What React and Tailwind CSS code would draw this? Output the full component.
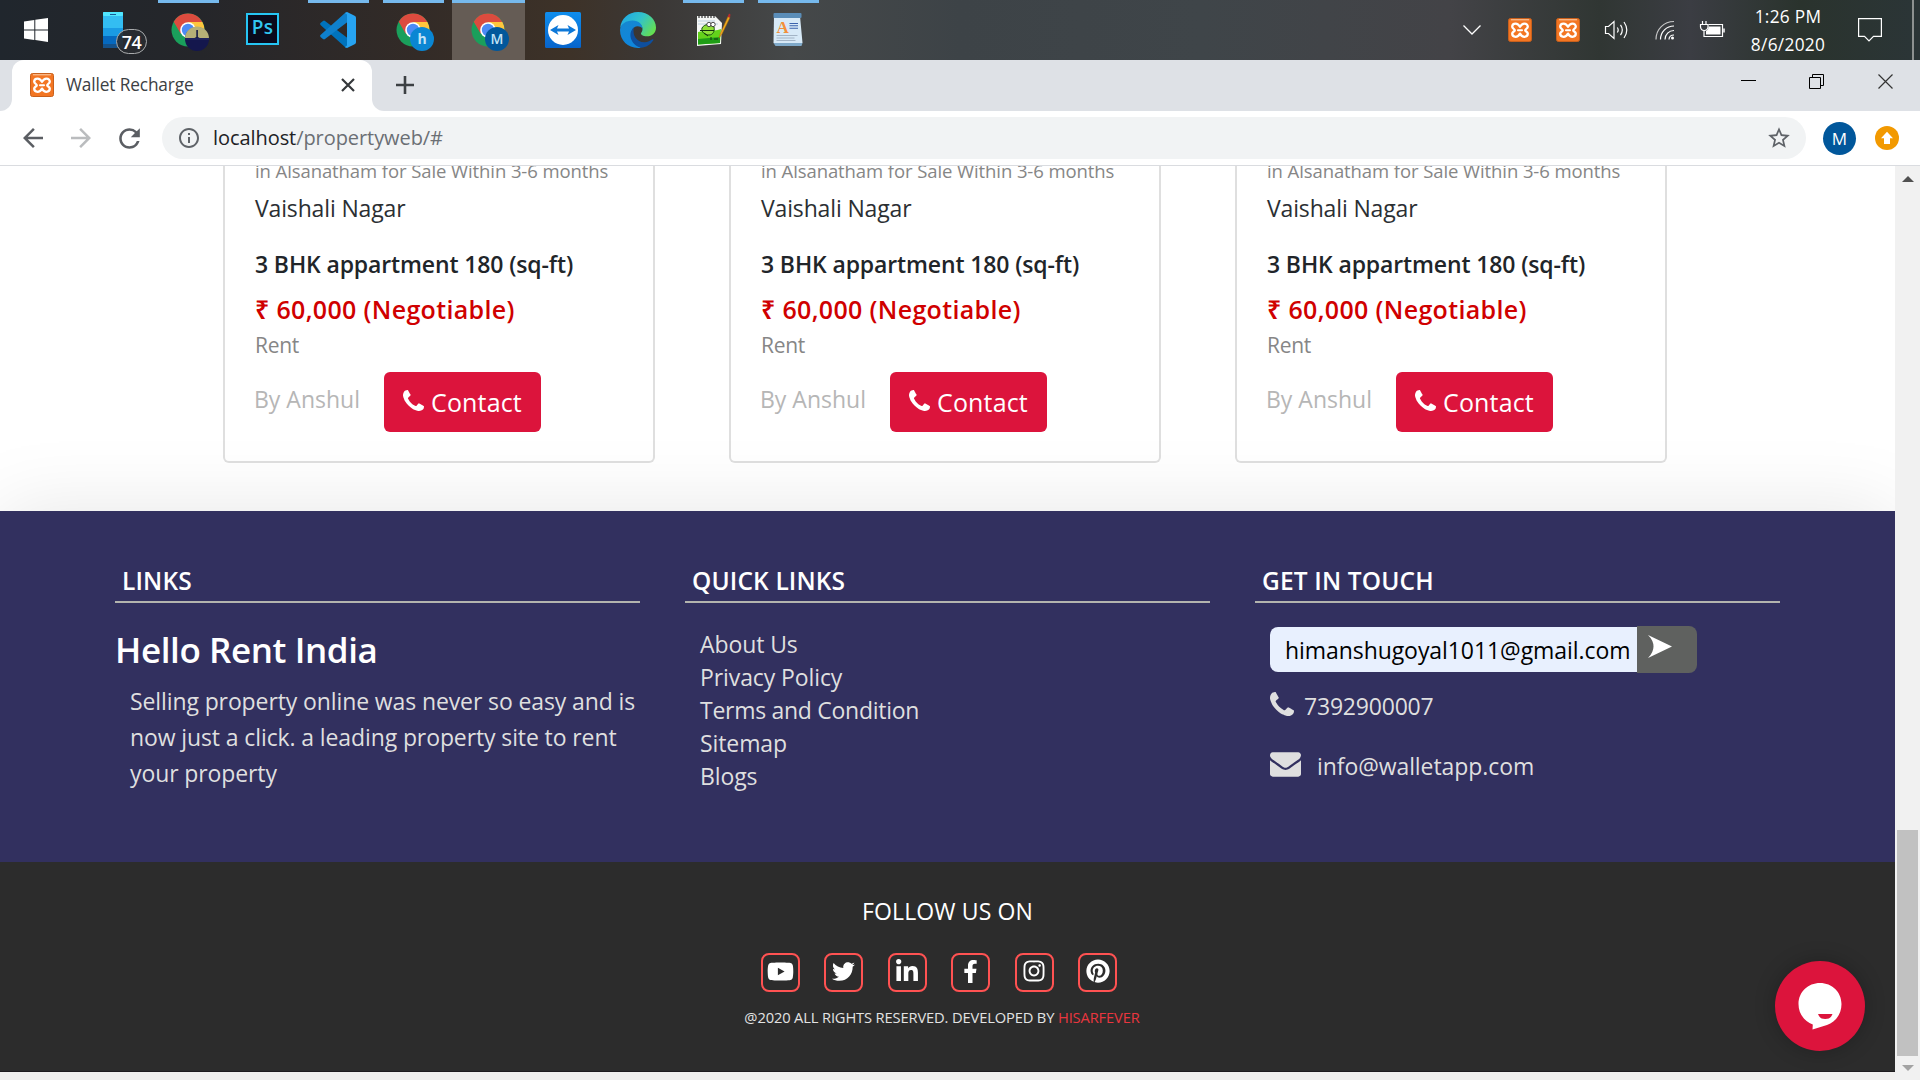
import React from "react";
import { FaYoutube, FaTwitter, FaLinkedinIn, FaFacebookF, FaInstagram, FaPinterest } from "react-icons/fa";
import { MdArrowBack, MdArrowForward, MdRefresh, MdInfoOutline, MdStarBorder } from "react-icons/md";

/* ---------- shared icons ---------- */

function PhoneIcon({ className }) {
  return (
    <svg viewBox="0 -1408 1408 1408" className={className} fill="currentColor">
      <path
        transform="scale(1,-1)"
        d="M1408 296q0 -27 -10 -70.5t-21 -68.5q-21 -50 -122 -106q-94 -51 -186 -51q-27 0 -53 3.5t-57.5 12.5t-47 14.5t-55.5 20.5t-49 18q-98 35 -175 83q-127 79 -264 216t-216 264q-48 77 -83 175q-3 9 -18 49t-20.5 55.5t-14.5 47t-12.5 57.5t-3.5 53q0 92 51 186q56 101 106 122q25 11 68.5 21t70.5 10q14 0 21 -3q18 -6 53 -76q11 -19 30 -54t35 -63.5t31 -53.5q3 -4 17.5 -25t21.5 -35.5t7 -28.5q0 -20 -28.5 -50t-62 -55t-62 -53t-28.5 -46q0 -9 5 -22.5t8.5 -20.5t14 -24t11.5 -19q76 -137 174 -235t235 -174q2 -1 19 -11.5t24 -14t20.5 -8.5t22.5 -5q18 0 46 28.5t53 62t55 62t50 28.5q14 0 28.5 -7t35.5 -21.5t25 -17.5q25 -15 53.5 -31t63.5 -35t54 -30q70 -35 76 -53q3 -7 3 -21z"
      />
    </svg>
  );
}

function EnvelopeIcon({ className }) {
  return (
    <svg viewBox="0 -1280 1792 1408" className={className} fill="currentColor">
      <path
        transform="scale(1,-1)"
        d="M1792 826v-794q0 -66 -47 -113t-113 -47h-1472q-66 0 -113 47t-47 113v794q44 -49 101 -87q362 -246 497 -345q57 -42 92.5 -65.5t94.5 -48t110 -24.5h1h1q51 0 110 24.5t94.5 48t92.5 65.5q170 123 498 345q57 39 100 87zM1792 1120q0 -79 -49 -151t-122 -123q-376 -261 -468 -325q-10 -7 -42.5 -31t-54 -38.5t-52 -32.5t-57.5 -27t-50 -9h-1h-1q-23 0 -50 9t-57.5 27t-52 32.5t-54 38.5t-42.5 31q-91 64 -262 182.5t-205 142.5q-62 42 -117 115.5t-55 136.5q0 78 41.5 130t118.5 52h1472q65 0 112.5 -47t47.5 -113z"
      />
    </svg>
  );
}

function XamppIcon() {
  return (
    <svg viewBox="0 0 24 24" className="h-6 w-6 shrink-0">
      <rect x="0.5" y="0.5" width="23" height="23" rx="2" fill="#f37623" stroke="#c9601c" />
      <rect x="3" y="1" width="18" height="1.4" fill="#f9b684" />
      <path
        d="M12 8.8C11 7 9.8 5.600 7.600 5.600C5.400 5.600 4.200 7 4.200 8.800C4.200 10.600 6.800 11 6.800 12.200C6.800 13.400 4.200 13.800 4.200 15.600C4.200 17.400 5.400 18.800 7.600 18.800C9.800 18.800 11 17.400 12 15.600C13 17.400 14.200 18.800 16.400 18.800C18.600 18.800 19.800 17.400 19.800 15.600C19.800 13.800 17.200 13.400 17.200 12.200C17.200 11 19.800 10.600 19.800 8.800C19.800 7 18.600 5.600 16.400 5.600C14.200 5.600 13 7 12 8.800Z"
        fill="none"
        stroke="#fff"
        strokeWidth="2.3"
        strokeLinejoin="round"
      />
      <path d="M10 12.200h4" stroke="#fff" strokeWidth="2" strokeLinecap="round" />
    </svg>
  );
}

/* ---------- taskbar ---------- */

function WindowsLogo() {
  return (
    <svg viewBox="0 0 24 24" className="h-6 w-6" fill="#fff">
      <path d="M0 3.4L10.3 2v9.4H0zM11.3 1.8L24 0v11.4H11.3zM0 12.4h10.3v9.5L0 20.6zM11.3 12.4H24V24l-12.7-1.9z" />
    </svg>
  );
}

function PhoneApp() {
  return (
    <div className="relative h-9 w-5">
      <svg viewBox="0 0 20 36" className="h-9 w-5">
        <rect width="20" height="36" rx="1" fill="#33bdf2" />
        <rect width="20" height="4" rx="1" fill="#50e6ff" />
        <rect x="7" y="2" width="6" height="1" fill="#185a97" />
        <rect y="16" width="20" height="8" fill="#1a9be4" />
        <rect y="24" width="20" height="8" fill="#0669bf" />
        <rect y="32" width="20" height="4" fill="#15528b" />
      </svg>
      <span className="absolute left-[13px] top-[17px] flex h-[25px] w-[31px] items-center justify-center rounded-full border border-[#a9abad] bg-[#292c31]/90 pl-px text-[18px] font-semibold leading-none tracking-[-0.5px] text-white">
        74
      </span>
    </div>
  );
}

function ChromeApp({ children }) {
  return (
    <svg viewBox="0 0 38 38" className="h-[38px] w-[38px]">
      <circle cx="17" cy="17" r="16.5" fill="#1a9f5b" />
      <path d="M17 9H31.4A16.5 16.5 0 0 1 17 33.5L24 21Z" fill="#fec63d" />
      <path d="M17 9h14.4A16.5 16.5 0 0 0 2.7 8.7l7 12z" fill="#dc4b3e" />
      <circle cx="17" cy="17" r="7.8" fill="#fff" />
      <circle cx="17" cy="17" r="6.2" fill="#4c8bf5" />
      {children}
    </svg>
  );
}

function PhotoBadge() {
  return (
    <g>
      <circle cx="26" cy="26" r="12" fill="#14174d" />
      <path d="M14 25.5a12 12 0 0 1 24 0z" fill="#b6b077" />
      <path d="M25.3 17h1.6v7l3.5 2h-8.8l3.7-2z" fill="#171c44" />
      <rect x="14" y="25" width="24" height="2" fill="#1f235c" />
    </g>
  );
}

function LetterBadge({ letter, color, bold }) {
  return (
    <g>
      <circle cx="26" cy="26" r="12" fill={color} />
      <text x="26" y="31" textAnchor="middle" fontSize="14" fontWeight={bold ? 700 : 600} fill="#c3e3f6">
        {letter}
      </text>
    </g>
  );
}

function PhotoshopApp() {
  return (
    <div className="-mt-[3px] flex h-8 w-[33px] items-center justify-center border-2 border-[#26c5f4] bg-[#0a0a1c] text-[19px] font-semibold leading-none tracking-[0.3px] text-[#31c5f0]">
      <span className="-mt-[3px]">Ps</span>
    </div>
  );
}

function VsCodeApp() {
  return (
    <svg viewBox="0 0 36 36" className="h-9 w-9">
      <path d="M0.8 10.8L3 9a1.6 1.6 0 0 1 2 0L27.500 26V36L25 35 0.800 13.200a1.600 1.600 0 0 1 0 -2.400Z" fill="#0073bd" />
      <path d="M0.8 25.200L3 27a1.600 1.600 0 0 0 2 0L27.500 10V0L25 1 0.800 22.800a1.600 1.600 0 0 0 0 2.400Z" fill="#0f80cc" />
      <path d="M25 1A2.200 2.200 0 0 1 27.500 0.300L34.600 3.700A2.300 2.300 0 0 1 36 5.800V30.200A2.300 2.300 0 0 1 34.600 32.300L27.500 35.700A2.200 2.200 0 0 1 25 35L27 33.500V2.500Z" fill="#27a4f2" />
    </svg>
  );
}

function TeamViewerApp() {
  return (
    <svg viewBox="0 0 36 36" className="h-9 w-9">
      <defs>
        <linearGradient id="tv" x1="0" y1="0" x2="0" y2="1">
          <stop offset="0" stopColor="#0f8eee" />
          <stop offset="1" stopColor="#0764cb" />
        </linearGradient>
      </defs>
      <rect width="36" height="36" rx="1.5" fill="url(#tv)" />
      <circle cx="18" cy="18" r="15" fill="#fff" />
      <path d="M5 18l8.500-5-1.500 3.600h12L22.500 13 31 18l-8.500 5 1.500-3.600H12l1.500 3.600z" fill="#0d78d8" />
    </svg>
  );
}

function EdgeApp() {
  return (
    <svg viewBox="0 0 36 36" className="h-9 w-9">
      <defs>
        <linearGradient id="edgeTop" x1="0" y1="0.2" x2="1" y2="0.7">
          <stop offset="0" stopColor="#1ea7e6" />
          <stop offset="0.5" stopColor="#33c3c9" />
          <stop offset="1" stopColor="#66e04e" />
        </linearGradient>
        <linearGradient id="edgeBody" x1="0" y1="0" x2="0.4" y2="1">
          <stop offset="0" stopColor="#1687cf" />
          <stop offset="1" stopColor="#0f86dd" />
        </linearGradient>
      </defs>
      <path d="M0.200 16C1 6.500 8.500 0 18 0C28.500 0 36 7.500 36 15.500C36 21 32 24.300 27 24.300C22.500 24.300 21 22.600 21 21.500C21 20.500 22.500 20 22.500 17C22.500 13 18.500 9.500 12.500 9.500C6.500 9.500 2 12.500 0.200 16Z" fill="url(#edgeTop)" />
      <path d="M0.100 17C1 12 6 8.500 12.500 8.500C19 8.500 22.500 12.500 22.500 16.500C20.500 14.300 17 13.500 14 15.500C9.500 19 10.500 30 21 35.700C9 37.500 -0.800 28.500 0.100 17Z" fill="url(#edgeBody)" />
      <path d="M14 15.500C11.800 23 17 30.500 24.500 30.300C28 30.200 30 28.800 32.500 27.300C33.200 27 33.700 27.700 33.300 28.300C30.500 32.700 26 35.500 21 35.800C10 32.500 7.500 20.500 14 15.500Z" fill="#0e4f9e" />
    </svg>
  );
}

function NotepadApp() {
  return (
    <svg viewBox="0 0 36 36" className="h-9 w-9">
      <path d="M2 4h18l7 7-1 21-24 2z" fill="#f4f6f5" />
      <path d="M4 3v3M7 3v3M10 3v3M13 3v3M16 3v3M19 3v3" stroke="#333" strokeWidth="1.200" />
      <path d="M3 9h17M3 12h20" stroke="#bcd0e0" strokeWidth="1" />
      <path d="M3 20c6-2 14 0 23-3l-1 14-22 1.500z" fill="#63d21b" />
      <path d="M3 27l22-2v6l-22 1.500z" fill="#1f9d16" />
      <path d="M7 16c3-5 9-4 12-1 1 4-1 8-5 8s-8-3-7-7z" fill="#8fe03a" stroke="#184f12" strokeWidth="1" />
      <circle cx="14" cy="12.500" r="2.200" fill="#fff" stroke="#222" strokeWidth="0.800" />
      <circle cx="18" cy="12.500" r="2.200" fill="#fff" stroke="#222" strokeWidth="0.800" />
      <path d="M5 18.500h14M9 21l4 3M16 25v3M19 27h4" stroke="#14310d" strokeWidth="1" />
      <path d="M24 26l1.500-5L33 4.500l2 1L27 22z" fill="#efab1e" stroke="#a8660c" strokeWidth="0.500" />
      <path d="M32.500 5L34 1.500l1.500 1-.5 3z" fill="#b72d2d" />
    </svg>
  );
}

function WordpadApp() {
  return (
    <svg viewBox="0 0 30 34" className="h-[34px] w-[30px]">
      <path d="M1 3h26l2.500 27H0.500z" fill="#d7e9f7" />
      <rect x="0.500" y="0" width="28" height="5" rx="1" fill="#5a8db8" />
      <path d="M0.500 30h29l-1 3h-26z" fill="#7fa9c9" />
      <text x="3.500" y="19.500" fontSize="17" fontWeight="700" fontFamily="Liberation Serif, serif" fill="#f3903a">A</text>
      <path d="M16.500 10.500h8.500M16.500 12.800h8.500M16.500 15.200h8.500" stroke="#3c63ad" strokeWidth="1.100" />
      <path d="M3.500 22.500h21M3.500 25h18M3.500 27.500h19" stroke="#a3b4c6" strokeWidth="1" />
    </svg>
  );
}

const APPS = [
  { icon: <PhoneApp /> },
  { open: true, icon: <ChromeApp><PhotoBadge /></ChromeApp>, shift: true },
  { icon: <PhotoshopApp /> },
  { open: true, icon: <VsCodeApp /> },
  { open: true, icon: <ChromeApp><LetterBadge letter="h" color="#0a86d3" bold /></ChromeApp>, shift: true },
  { active: true, icon: <ChromeApp><LetterBadge letter="M" color="#02579b" /></ChromeApp>, shift: true },
  { icon: <TeamViewerApp /> },
  { icon: <EdgeApp /> },
  { open: true, icon: <NotepadApp /> },
  { open: true, icon: <WordpadApp /> },
];

function TaskbarApp({ app }) {
  return (
    <div className="flex h-full w-[75px] justify-center">
      <div className={app.active ? "flex h-full w-[73px] flex-col items-center bg-[#655c55]" : "flex h-full w-[61px] flex-col items-center"}>
        <div className={app.open || app.active ? "h-[3px] w-full shrink-0 bg-[#76b9ed]" : "h-[3px] w-full shrink-0"} />
        <div className={app.shift ? "flex h-[58px] items-center pl-[3px]" : "flex h-[54px] items-center pr-[2px]"}>{app.icon}</div>
      </div>
    </div>
  );
}

function Tray() {
  const slot = "flex h-full w-12 items-center justify-center";
  return (
    <div className="ml-auto flex h-full items-center">
      <div className={slot}>
        <svg viewBox="0 0 18 10" className="h-[10px] w-[18px]" fill="none" stroke="#fff" strokeWidth="1.300">
          <path d="M0.500 0.500L9 9l8.500-8.500" />
        </svg>
      </div>
      <div className={slot}><XamppIcon /></div>
      <div className={slot}><XamppIcon /></div>
      <div className={slot}>
        <svg viewBox="0 0 24 20" className="h-5 w-6" fill="none" stroke="#fff" strokeWidth="1.200">
          <path d="M1.500 6.500H4.500L10 1.500V18.500L4.500 13.500H1.500Z" />
          <path d="M13.300 7.500q1.800 2.500 0 5M16.500 4.800q3.600 5.200 0 10.400M20 2q5.600 8 0 16" />
        </svg>
      </div>
      <div className={slot}>
        <svg viewBox="0 0 20 20" className="ml-[2px] h-5 w-5" fill="none" stroke="#fff" strokeWidth="1.200">
          <path d="M1 19.500C1 9 9 1.500 19 1.500" stroke="#c8c8c8" />
          <path d="M5.500 19.500C5.500 12 11.500 6 19 6" />
          <path d="M10 19.500C10 14.500 14 10.500 19 10.500" />
          <path d="M14 19.500C14 17 16 15 19 15" />
          <circle cx="17.500" cy="18" r="1.500" fill="#fff" stroke="none" />
        </svg>
      </div>
      <div className={slot}>
        <svg viewBox="0 0 26 18" className="-mt-[2px] h-[18px] w-[26px]" fill="none" stroke="#fff" strokeWidth="1.200">
          <path d="M9.500 4.500H23.500V16.500H5V10" />
          <path d="M9.500 6.500H21.500V14.500H7V11Q9.500 10 9.500 6.500Z" fill="#fff" stroke="none" />
          <path d="M25 8.500v4" strokeWidth="1.500" />
          <path d="M1.500 4.500H9V7Q8.500 10.500 5.200 10.500Q2 10.500 1.500 7ZM3.500 4.500V1M7 4.500V1" />
        </svg>
      </div>
      <div className="flex h-full w-[104px] flex-col items-center pt-[3px] text-[17.300px] leading-[28px] tracking-[0.300px] text-white">
        <span>1:26 PM</span>
        <span>8/6/2020</span>
      </div>
      <div className="flex h-full w-[60px] items-center justify-center">
        <svg viewBox="0 0 24 24" className="h-6 w-6" fill="none" stroke="#fff" strokeWidth="1.200">
          <path d="M0.600 0.600H23.400V18.400H15.500L11 23L6.500 18.400H0.600Z" />
        </svg>
      </div>
      <div className="ml-3 mr-[6px] h-full w-[2px] bg-[#8d9191]" />
    </div>
  );
}

function Taskbar() {
  return (
    <header className="flex h-[60px] shrink-0 items-center bg-[linear-gradient(90deg,#20262d_0px,#25262a_200px,#332b27_420px,#3d3228_570px,#3b3836_660px,#454849_790px,#3d4347_960px,#3f4549_1200px,#434347_1450px,#303633_1600px,#3b3d43_1690px,#2a332d_1800px,#2b3537_1920px)]">
      <div className="mr-1 flex h-full w-[72px] items-center justify-center">
        <WindowsLogo />
      </div>
      {APPS.map((app, i) => (
        <TaskbarApp key={i} app={app} />
      ))}
      <Tray />
    </header>
  );
}

/* ---------- browser chrome ---------- */

function TabStrip() {
  return (
    <div className="flex h-[51px] shrink-0 bg-[#dee1e6]">
      <div className="flex w-3 items-end bg-white">
        <div className="h-full w-3 rounded-br-[12px] bg-[#dee1e6]" />
      </div>
      <div className="h-full w-[360px] bg-[#dee1e6]">
        <div className="flex h-full items-center rounded-t-[12px] bg-white pb-px pl-[18px] pr-[17px]">
          <XamppIcon />
          <span className="ml-3 text-[17.300px] leading-[24px] tracking-[-0.140px] text-[#3c4043]">Wallet Recharge</span>
          <svg viewBox="0 0 14 14" className="ml-auto h-[14px] w-[14px]" stroke="#35383b" strokeWidth="2.200">
            <path d="M1 1l12 12M13 1L1 13" />
          </svg>
        </div>
      </div>
      <div className="flex flex-1 bg-white">
        <div className="flex h-full flex-1 items-center rounded-bl-[12px] bg-[#dee1e6] pb-px pl-6">
          <svg viewBox="0 0 18 18" className="h-[18px] w-[18px]" stroke="#3c4043" strokeWidth="2.600">
            <path d="M9 0v18M0 9h18" />
          </svg>
          <div className="ml-auto flex items-center self-start pt-[14px]">
            <svg viewBox="0 0 16 16" className="mr-[52px] h-4 w-4">
              <path d="M0 6.500h15" stroke="#000" />
            </svg>
            <svg viewBox="0 0 16 16" className="mr-[53px] h-4 w-4" fill="none" stroke="#000">
              <path d="M0.500 3.500h11v11h-11zM3.500 3.500v-3h11v11h-3" />
            </svg>
            <svg viewBox="0 0 16 16" className="mr-[26px] h-4 w-4" stroke="#333" strokeWidth="1.200">
              <path d="M0.500 0.500l14 14M14.500 0.500l-14 14" />
            </svg>
          </div>
        </div>
      </div>
    </div>
  );
}

function Toolbar() {
  return (
    <div className="flex h-[55px] shrink-0 items-center border-b border-[#dadce0] bg-white pl-[18px]">
      <MdArrowBack className="h-[30px] w-[30px] text-[#5b5e63]" />
      <MdArrowForward className="ml-[18px] h-[30px] w-[30px] text-[#babcbe]" />
      <MdRefresh className="ml-[18px] h-[31px] w-[31px] text-[#5b5e63]" />
      <div className="ml-[17px] flex h-[42px] w-[1644px] items-center rounded-full bg-[#f1f3f4] pl-[15px] pr-[14px]">
        <MdInfoOutline className="h-6 w-6 text-[#5f6368]" />
        <span className="ml-3 text-[20px] leading-[30px] tracking-[-0.070px] text-[#202124]">
          localhost<span className="text-[#6b6f74]">/propertyweb/#</span>
        </span>
        <MdStarBorder className="ml-auto h-[26px] w-[26px] text-[#5f6368]" />
      </div>
      <div className="ml-[17px] flex h-[33px] w-[33px] items-center justify-center rounded-full bg-[#01579b] text-[17px] font-medium leading-none text-white">
        M
      </div>
      <svg viewBox="0 0 24 24" className="ml-[19px] h-6 w-6">
        <circle cx="12" cy="12" r="12" fill="#f29900" />
        <path d="M12 5.800L18 12.300h-3V18H9v-5.700H6z" fill="#fff" />
      </svg>
    </div>
  );
}

/* ---------- page ---------- */

function PropertyCard() {
  return (
    <article className="flex h-[297px] w-[432px] flex-col rounded-b-[6px] border-2 border-t-0 border-[#dfdfdf] bg-white pl-[30px]">
      <p className="-mt-[9px] text-[18.500px] leading-[28px] tracking-[-0.090px] text-[#868686]">in Alsanatham for Sale Within 3-6 months</p>
      <p className="mt-[5px] text-[23px] leading-[36px] tracking-[-0.150px] text-[#2b2f33]">Vaishali Nagar</p>
      <h6 className="mt-5 text-[23px] font-semibold leading-[36px] tracking-[-0.130px] text-[#212529]">3 BHK appartment 180 (sq-ft)</h6>
      <p className="mt-[9px] text-[25px] font-semibold leading-[36px] tracking-[0.330px] text-[#d00000]">₹ 60,000 (Negotiable)</p>
      <p className="mt-[3px] text-[21px] leading-[30px] tracking-[-0.300px] text-[#868686]">Rent</p>
      <div className="mt-3 flex">
        <span className="-ml-px w-[130px] text-[23px] leading-[54px] text-[#b6b6b6]">By Anshul</span>
        <button className="flex h-[60px] w-[157px] items-center rounded-[6px] bg-[#dc143c] pl-[19px] text-white">
          <PhoneIcon className="-mt-[3px] mr-[7px] h-[21px] w-[21px]" />
          <span className="text-[25px] font-medium leading-[60px] tracking-[0.150px]">Contact</span>
        </button>
      </div>
    </article>
  );
}

function FooterColumn({ title, children }) {
  return (
    <section className="w-[525px]">
      <h5 className="border-b-2 border-[#b3b4ae] pb-[2px] pl-[7px] text-[24.500px] font-semibold leading-[36px] tracking-[0.150px] text-white">
        {title}
      </h5>
      {children}
    </section>
  );
}

const QUICK_LINKS = ["About Us", "Privacy Policy", "Terms and Condition", "Sitemap", "Blogs"];

function Footer() {
  return (
    <footer className="flex h-[351px] shrink-0 gap-[45px] bg-[#32305f] pl-[115px] pt-[52px] text-[23px] text-[#dfdfdf] shadow-[0_0_75px_rgba(0,0,0,0.1)]">
      <FooterColumn title="LINKS">
        <h3 className="mt-[25px] text-[35px] font-semibold leading-[44px] tracking-[-0.400px] text-white">Hello Rent India</h3>
        <p className="mt-[11px] whitespace-nowrap pl-[15px] leading-[36px] tracking-[-0.110px]">
          Selling property online was never so easy and is
          <br />
          now just a click. a leading property site to rent
          <br />
          your property
        </p>
      </FooterColumn>
      <FooterColumn title="QUICK LINKS">
        <ul className="mt-[25px] pl-[15px] leading-[33px] tracking-[-0.150px]">
          {QUICK_LINKS.map((l) => (
            <li key={l} className={l.length > 15 ? "tracking-[-0.280px]" : "tracking-[-0.100px]"}>
              {l}
            </li>
          ))}
        </ul>
      </FooterColumn>
      <FooterColumn title="GET IN TOUCH">
        <div className="mt-[23px] flex items-center pl-[15px]">
          <div className="h-[45px] w-[367px] rounded-l-[8px] bg-[#e8f0fe] pl-[15px] pt-px leading-[45px] tracking-[-0.070px] text-black">
            himanshugoyal1011@gmail.com
          </div>
          <button className="flex h-[47px] w-[60px] items-start rounded-r-[8px] bg-[#5f615f] pl-[11px] pt-[9px]">
            <svg viewBox="0 0 24 23" className="h-[23px] w-6" fill="#fff">
              <path d="M0 0L24 11.500L0 23Q5.500 17.500 5.500 11.500Q5.500 5.500 0 0Z" />
            </svg>
          </button>
        </div>
        <div className="mt-[15px] flex items-center pl-[15px] leading-[36px] tracking-[-0.200px]">
          <PhoneIcon className="-mt-[5px] mr-[10px] h-6 w-6" />
          7392900007
        </div>
        <div className="mt-6 flex items-center pl-[15px] leading-[36px] tracking-[-0.080px]">
          <EnvelopeIcon className="-mt-[3px] mr-4 h-[25px] w-[31px]" />
          info@walletapp.com
        </div>
      </FooterColumn>
    </footer>
  );
}

const SOCIAL = [
  { Icon: FaYoutube, size: "h-[25px] w-[27px]" },
  { Icon: FaTwitter, size: "h-[23px] w-[23px]" },
  { Icon: FaLinkedinIn, size: "h-[25px] w-[24px]" },
  { Icon: FaFacebookF, size: "h-[23px] w-[23px]" },
  { Icon: FaInstagram, size: "h-[24px] w-[24px]" },
  { Icon: FaPinterest, size: "h-[24px] w-[24px]" },
];

function BottomBar() {
  return (
    <div className="flex h-[210px] shrink-0 flex-col items-center border-b border-[#1f1c1f] bg-[#2c2c2c] pt-[31px]">
      <p className="text-[23px] leading-[36px] tracking-[0.130px] text-white">FOLLOW US ON</p>
      <div className="mr-[17px] mt-6 flex gap-[24.600px]">
        {SOCIAL.map(({ Icon, size }, i) => (
          <a key={i} className="flex h-[39px] w-[39px] items-center justify-center rounded-[8px] border-2 border-[#ff5252] pb-[3px] text-white">
            <Icon className={size} />
          </a>
        ))}
      </div>
      <p className="mr-[11px] mt-[13px] whitespace-nowrap text-[14.700px] leading-6 tracking-[-0.140px] text-[#e3e3e3]">
        @2020 ALL RIGHTS RESERVED. DEVELOPED BY <span className="text-[#e9363f]">HISARFEVER</span>
      </p>
    </div>
  );
}

function ChatButton() {
  return (
    <div className="absolute bottom-[21px] right-[30px] flex h-[90px] w-[90px] items-center justify-center rounded-full bg-[#dc143c] shadow-[0_0_20px_rgba(0,0,0,0.25)]">
      <svg viewBox="0 0 44 48" className="h-12 w-11">
        <path d="M22 1C34 1 43.500 10 43.500 22C43.500 33 37 40 29 43L14.500 47.500L14.800 42.500C6 39 0.500 31.500 0.500 22C0.500 10 10 1 22 1Z" fill="#fff" />
        <path d="M20 32h14.500c-1.500 4-4 5-7.300 5s-5.700-1-7.200-5z" fill="#dc143c" />
      </svg>
    </div>
  );
}

function Scrollbar() {
  return (
    <div className="flex h-full w-[25px] flex-col items-center bg-[#f1f1f1]">
      <svg viewBox="0 0 12 6" className="mt-[10px] h-[6px] w-3">
        <path d="M0 6L6 0l6 6z" fill="#505050" />
      </svg>
      <div className="mt-auto h-[226px] w-[21px] bg-[#c1c1c1]" />
      <svg viewBox="0 0 12 6" className="mb-[9px] mt-[9px] h-[6px] w-3">
        <path d="M0 0L6 6l6-6z" fill="#a3a3a3" />
      </svg>
    </div>
  );
}

export default function App() {
  return (
    <div className="flex h-[1080px] w-[1920px] flex-col overflow-hidden bg-[#f1f0ef] font-['Open_Sans','Noto_Sans',sans-serif]">
      <Taskbar />
      <TabStrip />
      <Toolbar />
      <div className="flex h-[914px]">
        <main className="relative flex h-[906px] w-[1895px] flex-col overflow-hidden bg-white">
          <div className="flex h-[345px] shrink-0 gap-[74px] pl-[223px]">
            <PropertyCard />
            <PropertyCard />
            <PropertyCard />
          </div>
          <Footer />
          <BottomBar />
          <ChatButton />
        </main>
        <Scrollbar />
      </div>
    </div>
  );
}
